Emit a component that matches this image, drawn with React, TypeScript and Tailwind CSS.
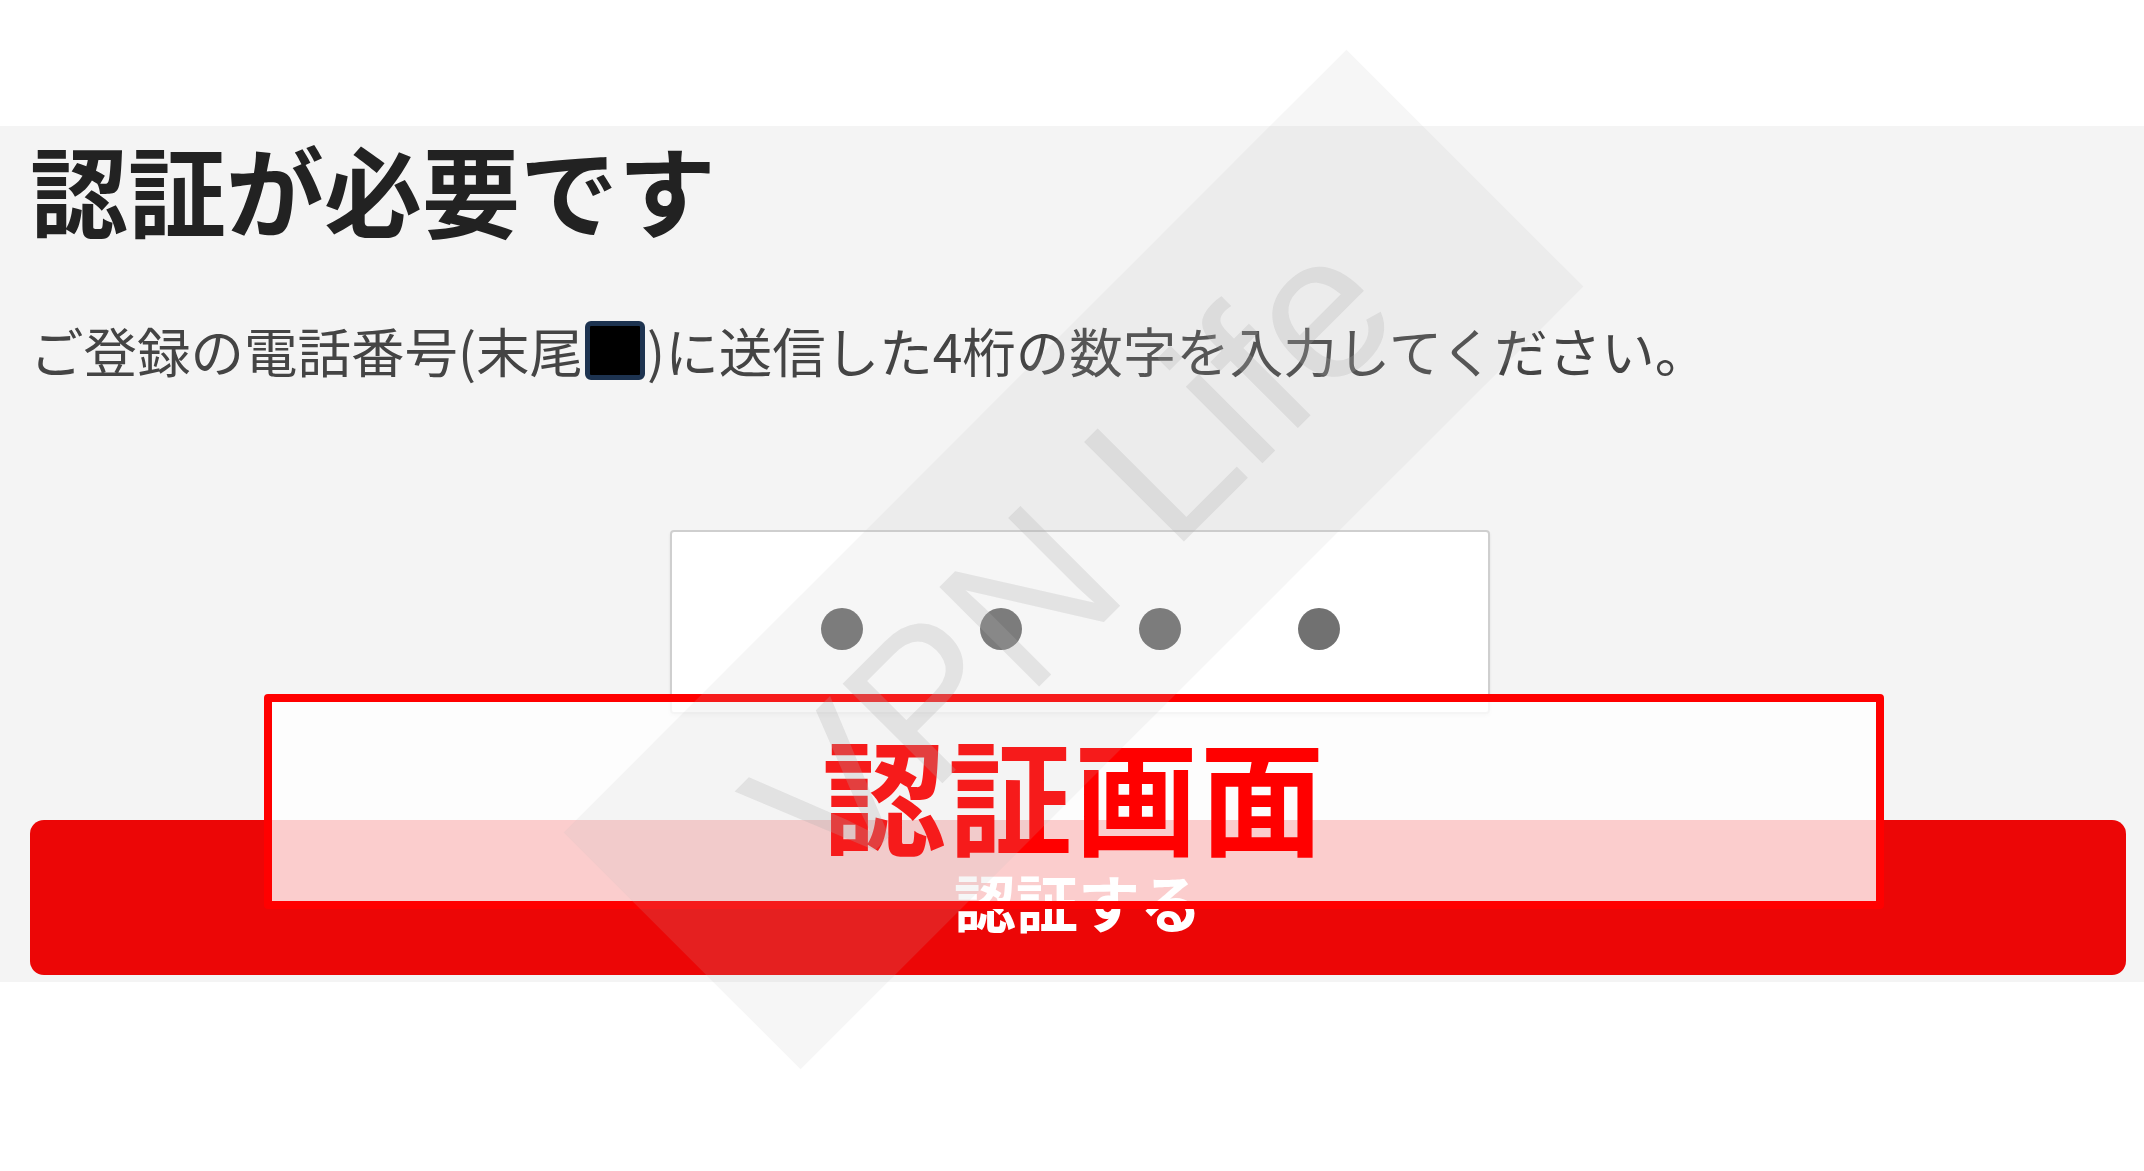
export default function App() {
  return (
    <div className="relative h-[1171px] w-[2144px] overflow-hidden bg-white font-['Noto_Sans_CJK_JP',sans-serif]">
      <div className="mt-[126px] bg-[#f4f4f4] pl-[30px] pr-[18px] pt-[12px] pb-[7px]">
        <h1 className="text-[98px] font-bold leading-none text-[#222]">認証が必要です</h1>

        <p className="mt-[84px] flex items-center text-[53.5px] leading-[60px] text-[#444]">
          ご登録の電話番号(末尾
          <span className="mx-[2px] inline-block h-[59px] w-[60px] rounded-[6px] border-[5px] border-[#1d3350] bg-black" />
          )に送信した4桁の数字を入力してください。
        </p>

        <div className="ml-[640px] mt-[150px] flex h-[184px] w-[820px] items-center justify-center gap-[117px] rounded-[4px] border-2 border-[#cfcfcf] bg-white pt-[14px] shadow-[0_2px_3px_rgba(0,0,0,0.08)]">
          <span className="h-[42px] w-[42px] rounded-full bg-[#717171]" />
          <span className="h-[42px] w-[42px] rounded-full bg-[#717171]" />
          <span className="h-[42px] w-[42px] rounded-full bg-[#717171]" />
          <span className="h-[42px] w-[42px] rounded-full bg-[#717171]" />
        </div>

        <button
          type="button"
          className="mt-[106px] flex h-[155px] w-full items-center justify-center rounded-[14px] bg-[#ec0606] pt-[8px] text-[62px] font-bold text-white"
        >
          認証する
        </button>
      </div>

      {/* caption overlay */}
      <div className="absolute left-[264px] top-[694px] flex h-[215px] w-[1620px] items-center justify-center rounded-[4px] border-[8px] border-[#ff0000] bg-white/80 pb-[20px]">
        <span className="text-[124px] font-bold leading-none tracking-[2px] text-[#ff0000]">認証画面</span>
      </div>

      {/* watermark */}
      <div className="pointer-events-none absolute left-[520px] top-[392px] flex h-[335px] w-[1107px] -rotate-45 items-center justify-center bg-[rgba(190,190,190,0.14)]">
        <span className="-translate-y-[6px] font-['Liberation_Sans',Arial,sans-serif] text-[205px] leading-none text-[rgba(170,170,170,0.25)]">
          VPN Life
        </span>
      </div>
    </div>
  )
}
